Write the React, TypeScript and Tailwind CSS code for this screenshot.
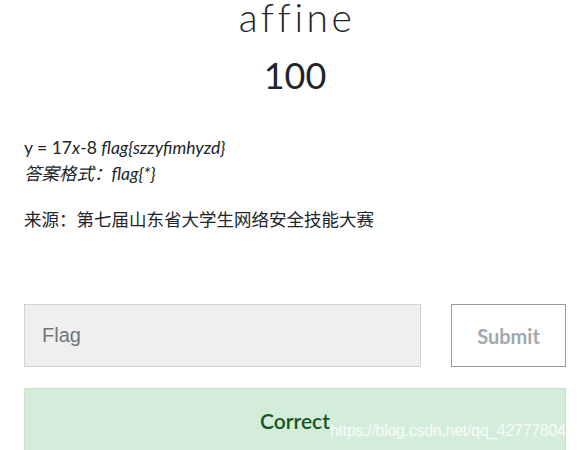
export default function App() {
  return (
    <div className="relative w-[583px] h-[450px] overflow-hidden bg-white text-[#212529] font-['Lato','Noto_Sans_CJK_SC',sans-serif]">
      <div className="pl-6 pr-[17px]">
        <h1 className="text-center text-[39px] font-light leading-[34px] tracking-[3.5px] pl-[4px]">affine</h1>
        <h2 className="text-center text-[36px] font-normal leading-[40px] mt-[21px]">100</h2>

        <div className="mt-[40px] text-[17.5px] leading-[26px]">
          <p>
            y = 17<em>x</em>-8 <em>flag{'{'}szzyfimhyzd{'}'}</em>
            <br />
            <em>答案格式：flag{'{'}*{'}'}</em>
          </p>
          <p className="mt-[20px]">来源：第七届山东省大学生网络安全技能大赛</p>
        </div>

        <div className="mt-[71px] flex justify-between">
          <input
            placeholder="Flag"
            className="w-[397px] h-[63px] bg-[#efefef] border border-[#ced4da] px-[17px] text-[20px] font-['Liberation_Sans',sans-serif] placeholder:text-[#6c757d] outline-none"
          />
          <button className="w-[115px] h-[63px] border border-[#9a9a9a] text-[20px] font-bold text-[#a2a8ae] bg-white">
            Submit
          </button>
        </div>

        <div className="mt-[21px] h-[70px] bg-[#d4edda] border border-[#c3e6cb] flex justify-center pt-[16px] text-[21px] text-[#155724] font-semibold">
          Correct
        </div>
      </div>
      <span className="absolute left-[330px] top-[419px] text-[16px] text-white/80 font-['Liberation_Sans',sans-serif] tracking-[-0.3px]">
        https://blog.csdn.net/qq_42777804
      </span>
    </div>
  );
}
